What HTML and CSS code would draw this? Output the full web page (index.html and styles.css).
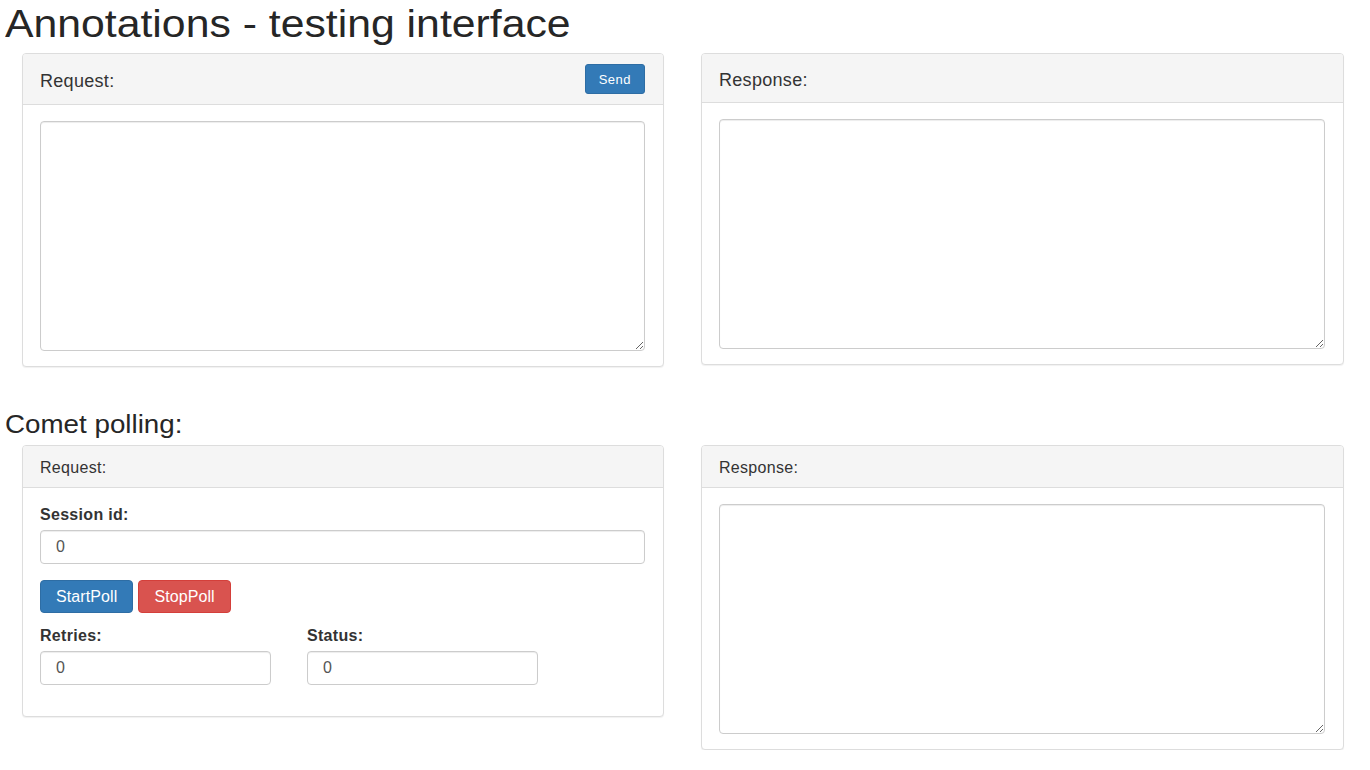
FILE: index.html
```html
<!DOCTYPE html>
<html lang="en">
<head>
<meta charset="utf-8">
<title>Annotations - testing interface</title>
<link rel="stylesheet" href="styles.css">
</head>
<body>
<h1 class="page-title"><span class="wide wide-lg">Annotations - testing interface</span></h1>
<div class="row">
  <div class="panel">
    <div class="panel-heading heading-lg heading-btn">
      <span>Request:</span>
      <button class="btn btn-primary btn-sm" type="button">Send</button>
    </div>
    <div class="panel-body body-text">
      <textarea class="form-control area"></textarea>
    </div>
  </div>
  <div class="panel">
    <div class="panel-heading heading-lg">
      <span>Response:</span>
    </div>
    <div class="panel-body body-text">
      <textarea class="form-control area"></textarea>
    </div>
  </div>
</div>

<h3 class="section-title"><span class="wide">Comet polling:</span></h3>
<div class="row">
  <div class="panel">
    <div class="panel-heading heading-sm">
      <span>Request:</span>
    </div>
    <div class="panel-body body-form">
      <label class="field-label">Session id:</label>
      <input class="form-control input" type="text" value="0">
      <div class="btn-row">
        <button class="btn btn-primary" type="button">StartPoll</button>
        <button class="btn btn-danger" type="button">StopPoll</button>
      </div>
      <div class="pair">
        <div class="pair-col">
          <label class="field-label">Retries:</label>
          <input class="form-control input" type="text" value="0">
        </div>
        <div class="pair-col">
          <label class="field-label">Status:</label>
          <input class="form-control input" type="text" value="0">
        </div>
      </div>
    </div>
  </div>
  <div class="panel">
    <div class="panel-heading heading-sm">
      <span>Response:</span>
    </div>
    <div class="panel-body body-text">
      <textarea class="form-control area"></textarea>
    </div>
  </div>
</div>
</body>
</html>
```

FILE: styles.css
```css
* {
  box-sizing: border-box;
}

html, body {
  margin: 0;
  padding: 0;
  background: #fff;
}

body {
  font-family: "Liberation Sans", Arial, Helvetica, sans-serif;
  color: #333;
  font-size: 16px;
  line-height: 20px;
  letter-spacing: 0.3px;
  width: 1370px;
}

.wide {
  display: inline-block;
  transform: scaleX(1.11);
  transform-origin: 0 50%;
}

.wide-lg {
  transform: scaleX(1.125);
}

.page-title {
  margin: 4px 0 9px 5px;
  font-size: 38px;
  line-height: 40px;
  font-weight: 400;
  letter-spacing: 0;
  color: #262626;
}

.section-title {
  margin: 44px 0 7px 5px;
  font-size: 25px;
  line-height: 27px;
  font-weight: 400;
  letter-spacing: 0;
  color: #262626;
}

.row {
  display: grid;
  grid-template-columns: 642px 643px;
  column-gap: 37px;
  padding-left: 22px;
  align-items: start;
}

.panel {
  background: #fff;
  border: 1px solid #ddd;
  border-radius: 4px;
  box-shadow: 0 1px 1px rgba(0, 0, 0, 0.06);
}

.panel-heading {
  background: #f5f5f5;
  border-bottom: 1px solid #ddd;
  border-radius: 3px 3px 0 0;
  display: flex;
  align-items: center;
  justify-content: space-between;
  padding: 0 18px 0 17px;
}

.heading-lg {
  height: 49px;
  font-size: 18px;
  padding-top: 4px;
}

.heading-btn {
  height: 51px;
  padding-top: 0;
  padding-right: 18px;
}

.heading-btn span {
  padding-top: 4px;
}

.heading-sm {
  height: 42px;
  font-size: 16px;
  padding-top: 2px;
}

.panel-body {
  padding: 16px 18px 15px 17px;
}

.body-form {
  padding: 17px 18px 31px 17px;
}

.form-control {
  display: block;
  width: 100%;
  border: 1px solid #ccc;
  border-radius: 4px;
  background: #fff;
  box-shadow: inset 0 1px 1px rgba(0, 0, 0, 0.075);
  font-family: "Liberation Sans", Arial, Helvetica, sans-serif;
  color: #555;
  font-size: 16px;
  margin: 0;
}

.area {
  height: 230px;
  resize: vertical;
  padding: 6px 12px;
}

.input {
  height: 34px;
  padding: 0 15px;
}

.field-label {
  display: block;
  font-weight: 700;
  font-size: 16px;
  line-height: 20px;
  margin-bottom: 5px;
  color: #333;
}

.btn {
  font-family: "Liberation Sans", Arial, Helvetica, sans-serif;
  border: 1px solid transparent;
  border-radius: 4px;
  color: #fff;
  font-size: 16px;
  letter-spacing: 0.1px;
  height: 33px;
  padding: 0 15px;
  cursor: pointer;
}

.btn-sm {
  font-size: 13px;
  letter-spacing: 0.5px;
  height: 30px;
  padding: 0 13px;
  border-radius: 3px;
}

.btn-primary {
  background: #337ab7;
  border-color: #2e6da4;
}

.btn-danger {
  background: #d9534f;
  border-color: #d43f3a;
}

.btn-row {
  display: flex;
  gap: 5px;
  margin-top: 16px;
}

.pair {
  display: grid;
  grid-template-columns: 231px 231px;
  column-gap: 36px;
  margin-top: 13px;
}
```
